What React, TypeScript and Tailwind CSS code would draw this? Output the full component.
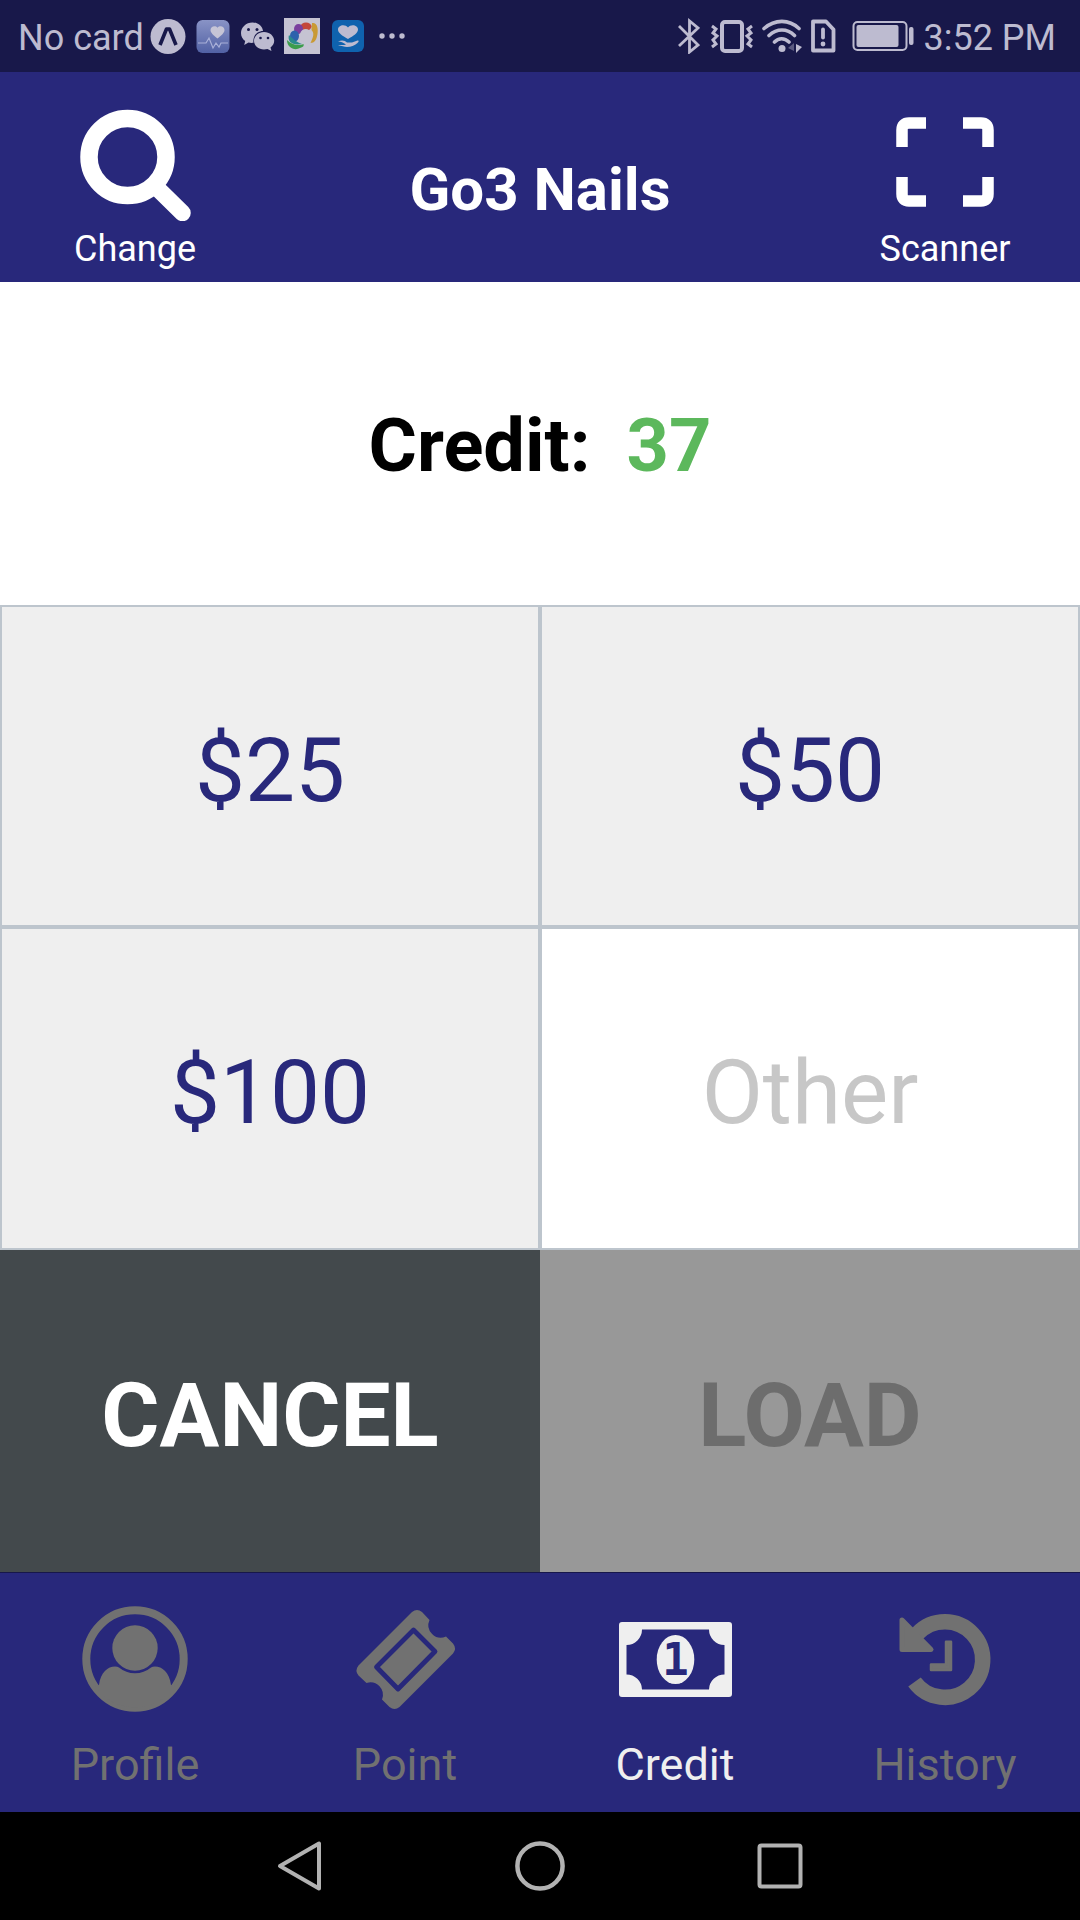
import { ReactNode, useState } from "react";

const amounts = ["$25", "$50", "$100"];

const StatusBar = () => (
  <div className="flex h-[72px] items-center justify-between bg-[#18184a] pr-6 pl-[18px] text-4xl/[42px] text-[#bdbbd0]">
    <div className="flex items-center">
      <span className="mr-1.5 pt-[3px]">No card</span>
      <svg className="mr-2.5 size-9" viewBox="0 0 36 36" aria-hidden="true">
        <circle cx="18" cy="18.500" r="17.500" fill="#bdbbd0" />
        <path d="M10 27 16.500 11h3L26 27" fill="none" stroke="#18184a" strokeWidth="3.600" strokeLinejoin="round" />
      </svg>
      <svg className="mr-2 size-9" viewBox="0 0 36 36" aria-hidden="true">
        <defs>
          <linearGradient id="health" x1="0" y1="0" x2="0" y2="1">
            <stop offset="0" stopColor="#8993c6" />
            <stop offset="1" stopColor="#5161a4" />
          </linearGradient>
        </defs>
        <rect x="0.500" y="2" width="33" height="33" rx="6" fill="url(#health)" />
        <path d="M21.500 20.500C17 17 14.500 14.500 14.500 12c0-4 5-5 7-2.300 2-2.700 7-1.700 7 2.300 0 2.500-2.500 5-7 8.500z" fill="#c6c5d6" />
        <path d="M2 25h8l3-5 4 10 3-5 3 4 2-4h7" fill="none" stroke="#a9b0d8" strokeWidth="1.200" />
      </svg>
      <svg className="mr-2 size-9" viewBox="0 0 36 36" aria-hidden="true">
        <path d="M12.500 4.500C6 4.500 1 9.500 1 15c0 3.500 1.500 6 4.200 8l-1 4 4.300-2.500c1.500.5 3.500.5 5 .3C12.500 17 18 13 23 13 22.500 8 18 4.500 12.500 4.500z" fill="#bdbbd0" />
        <path d="M24 14c-5.500 0-10 4-10 8.800 0 5 4.500 8.700 10 8.700 1.200 0 2.500-.2 3.500-.5l4 2-1-3.500c2.300-1.700 3.700-4 3.700-6.700 0-4.800-4.500-8.800-10.200-8.800z" fill="#bdbbd0" />
        <g fill="#18184a">
          <circle cx="8.500" cy="11.500" r="1.500" />
          <circle cx="17" cy="11.500" r="1.500" />
          <circle cx="20.500" cy="20" r="1.300" />
          <circle cx="28" cy="20" r="1.300" />
        </g>
      </svg>
      <svg className="mr-2.5 size-9" viewBox="0 0 36 36" aria-hidden="true">
        <path d="M0 0h36v36H0z" fill="#c5c3d2" />
        <path d="M28 5c5-1 6.500 5 5.500 11s-3 9-7 9c3-6 4-10 1-13z" fill="#c99a35" />
        <ellipse cx="22" cy="8.500" rx="5.500" ry="4" fill="#c4473a" />
        <ellipse cx="14.500" cy="11" rx="4.500" ry="5" fill="#7a3f9e" />
        <ellipse cx="10.500" cy="18" rx="4.500" ry="5.500" fill="#2e62ac" />
        <path d="M5 17c-2 6 3 11 13 9-6-2-9-5-13-9z" fill="#2a8a8c" />
        <path d="M3 22c0 8 8 11 13 8 3-1 4-2 4-4-6 2-12 1-17-4z" fill="#3c9d4c" />
        <path d="M16 16c1-5 6-6 9-4 3 1 4 4 3 7l-3 3-1 6h-4l-1-5c-3-1-4-4-3-7z" fill="#c5c3d2" />
      </svg>
      <svg className="mr-3 size-9" viewBox="0 0 36 36" aria-hidden="true">
        <rect x="2" y="2" width="32" height="32" rx="6" fill="#0f62ae" />
        <path d="M18 21C12 17.500 8 15 8 11.500c0-4.500 7-6 10-2 3-4 10-2.500 10 2 0 3.500-4.500 6.500-10 9.500z" fill="#bdbbd0" />
        <path d="M8 23.500c4-2 7-1 9 1h5l5.500-2c2 0 1 1.500 0 2.500-3 2.500-6.500 4-10.500 4-3 0-5-1.500-9-1.500 2-1 6 0 8-1-3-2-5-3-8-3z" fill="#bdbbd0" />
      </svg>
      <svg className="h-9 w-7" viewBox="0 0 28 36" fill="#bdbbd0" aria-hidden="true">
        <circle cx="4" cy="18" r="2.700" />
        <circle cx="14" cy="18" r="2.700" />
        <circle cx="24" cy="18" r="2.700" />
      </svg>
    </div>
    <div className="flex items-center">
      <svg className="mr-2.5 h-9 w-[22px]" viewBox="0 0 22 36" fill="none" stroke="#bdbbd0" strokeWidth="2.800" aria-hidden="true">
        <path d="M1 8l19 19-8.500 7V3L20 10 1 28" />
      </svg>
      <svg className="mr-2 h-9 w-11" viewBox="0 0 44 36" fill="none" stroke="#bdbbd0" aria-hidden="true">
        <rect x="12" y="4" width="20" height="29" rx="3" strokeWidth="4" />
        <path d="M2 8l4 3-3 4 4 3-4 4 3 4-4 3M42 8l-4 3 3 4-4 3 4 4-3 4 4 3" strokeWidth="3" />
      </svg>
      <svg className="mr-2 h-9 w-10" viewBox="0 0 40 36" fill="none" stroke="#bdbbd0" strokeWidth="3.600" strokeLinecap="round" aria-hidden="true">
        <path d="M2 10.500C13 1 27 1 37 10.500M7 17.500c8-7.300 18-7.300 25.500 0M12.500 24c4-4.300 10-4.500 14.500 0" />
        <circle cx="20" cy="30.500" r="3.500" fill="#bdbbd0" stroke="none" />
        <path d="M32 25v8l-6-3z" fill="#5b5a80" stroke="none" />
        <path d="M34 26v9l6-6z" fill="#bdbbd0" stroke="none" />
      </svg>
      <svg className="mr-4 h-9 w-[26px]" viewBox="0 0 26 36" fill="none" stroke="#bdbbd0" strokeWidth="3.800" strokeLinejoin="round" aria-hidden="true">
        <path d="M3 3.500h13l7.500 8v21H3z" />
        <path d="M13 11.500v8" strokeLinecap="round" />
        <circle cx="13" cy="26" r="2.400" fill="#bdbbd0" stroke="none" />
      </svg>
      <svg className="mr-2.5 h-9 w-[62px]" viewBox="0 0 62 36" aria-hidden="true">
        <rect x="1.500" y="4" width="53" height="28" rx="4" fill="none" stroke="#bdbbd0" strokeWidth="2" />
        <rect x="4.500" y="7" width="42" height="22" rx="2" fill="#bdbbd0" />
        <rect x="57" y="9" width="4.500" height="18" rx="2" fill="#bdbbd0" />
      </svg>
      <span className="pt-[3px]">3:52 PM</span>
    </div>
  </div>
);

const SearchIcon = () => (
  <svg className="size-28" viewBox="0 0 112 112" fill="none" stroke="currentColor" aria-hidden="true">
    <circle cx="48.500" cy="48" r="38.500" strokeWidth="17.500" />
    <path d="M75 76l28.500 28" strokeWidth="16.500" strokeLinecap="round" />
  </svg>
);

const ScannerIcon = () => (
  <svg className="size-28" viewBox="0 0 112 112" fill="none" stroke="currentColor" strokeWidth="11.500" aria-hidden="true">
    <path d="M13 38V21q0-7 7-7h17M74 14h18q7 0 7 7v17M99 68v17q0 7-7 7H74M37 92H20q-7 0-7-7V68" />
  </svg>
);

const ProfileIcon = () => (
  <svg className="size-[106px]" viewBox="0 0 106 106" fill="currentColor" aria-hidden="true">
    <circle cx="53" cy="53" r="48.700" fill="none" stroke="currentColor" strokeWidth="8" />
    <circle cx="53" cy="42" r="22.700" />
    <path d="M17 79C18.500 66 26 60.500 33 60.500Q35.500 60.500 37 61.500A25 25 0 0 0 69 61.500Q70.500 60.500 73 60.500C80 60.500 87.500 66 89 79L93 80A48 48 0 0 1 13 80Z" />
  </svg>
);

const PointIcon = () => (
  <svg className="size-[106px]" viewBox="0 0 106 106" fill="currentColor" aria-hidden="true">
    <path d="M60 6Q65 2 70 6L77.500 14A12.500 12.500 0 0 0 94 30.500L101 37.500Q105 42.500 101 47.500L47.500 101Q42.500 105 37.500 101L30 93.500A12.500 12.500 0 0 0 14.500 77L6.500 69.500Q2.500 64.500 6.500 59.500Z" />
    <path d="M61.500 24L83 45.500 46 83 24.500 61Z" fill="none" stroke="#28287b" strokeWidth="4.800" strokeLinejoin="round" />
  </svg>
);

const CreditIcon = () => (
  <svg className="h-[106px] w-[113px]" viewBox="0 0 113 106" fill="currentColor" aria-hidden="true">
    <path
      fillRule="evenodd"
      d="M3 16H110a3 3 0 0 1 3 3V88a3 3 0 0 1-3 3H3a3 3 0 0 1-3-3V19a3 3 0 0 1 3-3ZM23 23.500A15.500 15.500 0 0 1 7.500 39V68.500A15.500 15.500 0 0 1 23 83.500H90A15.500 15.500 0 0 1 105.500 68.500V39A15.500 15.500 0 0 1 90 23.500Z"
    />
    <ellipse cx="56.500" cy="53.500" rx="18.800" ry="24.500" />
    <text x="56.500" y="69" textAnchor="middle" fill="#28287b" className="font-['DejaVu_Sans_Mono'] text-[44px] font-bold">
      1
    </text>
  </svg>
);

const HistoryIcon = () => (
  <svg className="size-[106px]" viewBox="0 0 106 106" fill="none" stroke="currentColor" strokeLinejoin="round" aria-hidden="true">
    <path d="M25.500 27.500A37.800 37.800 0 1 1 22.500 76" strokeWidth="15.500" />
    <path d="M10 14L39 43.500H10Z" fill="currentColor" strokeWidth="5" />
    <path d="M54 35.700H59V64H39V58.500H54Z" fill="currentColor" strokeWidth="2.500" />
  </svg>
);

interface HeaderButtonProps {
  label: string;
  icon: ReactNode;
}

const HeaderButton = ({ label, icon }: HeaderButtonProps) => (
  <button type="button" className="flex flex-col items-center gap-[7px] text-4xl/[42px]">
    {icon}
    {label}
  </button>
);

const tabs = [
  { label: "Profile", icon: <ProfileIcon /> },
  { label: "Point", icon: <PointIcon /> },
  { label: "Credit", icon: <CreditIcon /> },
  { label: "History", icon: <HistoryIcon /> },
];

const App = () => {
  const [other, setOther] = useState("");
  const [activeTab, setActiveTab] = useState("Credit");

  return (
    <div className="flex min-h-screen flex-col bg-white font-[Roboto,sans-serif]">
      <StatusBar />

      <header className="grid grid-cols-[1fr_2fr_1fr] items-center bg-[#28287b] pt-[37px] pb-3 text-white">
        <HeaderButton label="Change" icon={<SearchIcon />} />
        <h1 className="text-center text-6xl/[70px] font-bold">Go3 Nails</h1>
        <HeaderButton label="Scanner" icon={<ScannerIcon />} />
      </header>

      <main className="grid flex-1 grid-cols-2 grid-rows-4 text-[89px]/[106px]">
        <p className="col-span-2 flex items-center justify-center gap-9 pt-1.5 text-[74px]/[88px] font-bold text-black">
          <span>Credit:</span>
          <span className="text-[#5cb85c]">37</span>
        </p>
        {amounts.map((amount) => (
          <button key={amount} type="button" className="border-2 border-[#bdc5cd] bg-[#efefef] pt-2.5 text-[#28287b]">
            {amount}
          </button>
        ))}
        <input
          type="text"
          inputMode="numeric"
          aria-label="Other"
          placeholder="Other"
          value={other}
          onChange={(e) => setOther(e.target.value)}
          className="w-full min-w-0 border-2 border-[#bdc5cd] bg-white pt-2.5 text-center text-[#28287b] outline-none placeholder:text-[#c7c7c7]"
        />
        <button type="button" className="bg-[#43494c] pt-2.5 font-bold text-white" onClick={() => setOther("")}>
          CANCEL
        </button>
        <button type="button" disabled={!other} className="bg-[#989898] pt-2.5 font-bold text-[#6d6d6d]">
          LOAD
        </button>
      </main>

      <nav className="grid grid-cols-4 border-t border-[#17174a] bg-[#28287b] pt-[33px] pb-[21px]">
        {tabs.map(({ label, icon }) => (
          <button
            key={label}
            type="button"
            onClick={() => setActiveTab(label)}
            className={`flex flex-col items-center gap-[26px] text-[45px]/[53px] ${
              label === activeTab ? "text-[#efefef]" : "text-[#717171]"
            }`}
          >
            {icon}
            {label}
          </button>
        ))}
      </nav>

      <div className="flex h-[108px] justify-center bg-black text-[#b2b2b2]">
        <div className="grid w-2/3 grid-cols-3 place-items-center">
          <button type="button" aria-label="Back">
            <svg className="size-[52px]" viewBox="0 0 52 52" fill="none" stroke="currentColor" strokeWidth="4" strokeLinejoin="round">
              <path d="M45 3.500V48.500L6 26Z" />
            </svg>
          </button>
          <button type="button" aria-label="Home">
            <svg className="size-[52px]" viewBox="0 0 52 52" fill="none" stroke="currentColor" strokeWidth="4.500">
              <circle cx="26" cy="26" r="22.600" />
            </svg>
          </button>
          <button type="button" aria-label="Recent apps">
            <svg className="size-[52px]" viewBox="0 0 52 52" fill="none" stroke="currentColor" strokeWidth="4">
              <rect x="5.500" y="5.500" width="41" height="41" rx="2" />
            </svg>
          </button>
        </div>
      </div>
    </div>
  );
};

export default App;
